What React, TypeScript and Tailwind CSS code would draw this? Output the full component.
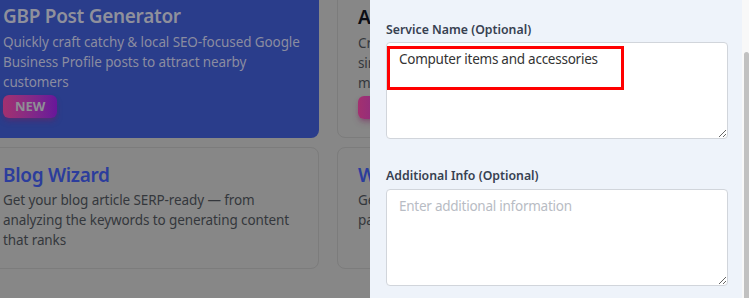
import React from 'react';

interface ToolCardProps {
    title: string;
    description: string;
    badge?: boolean;
    active?: boolean;
    titleClass?: string;
    descClass?: string;
}

// The page sits behind the drawer's backdrop, so its colours are the dimmed ones.
const ToolCard: React.FC<ToolCardProps> = ({ title, description, badge, active, titleClass, descClass }) => {
    return (
        <div
            className={
                active
                    ? 'rounded-b-lg bg-[#2a3d8b] pl-[21px] pr-[14px] pb-[18px]'
                    : 'rounded-lg border border-[#7c7c7c] bg-[#878787] pl-5 pr-[14px] pb-[18px]'
            }
        >
            <h3 className={`text-[19px] leading-[28px] font-semibold tracking-[-0.3px] ${titleClass ?? ''}`}>{title}</h3>
            <p
                className={`text-[13.5px] leading-[20px] tracking-[-0.1px] ${active ? 'text-[#8a8ca0]' : 'text-[#34373c]'} ${descClass ?? ''}`}
            >
                {description}
            </p>
            {badge && (
                <span className="mt-[3px] inline-flex h-[23px] items-center rounded-md bg-gradient-to-r from-[#a3306f] to-[#69159a] px-3 text-[13px] font-bold text-[#8f8f95] shadow-md shadow-[#7a2060]/40">
                    NEW
                </span>
            )}
        </div>
    );
};

export default function App() {
    return (
        <div
            className="flex h-[298px] w-[749px] overflow-hidden bg-[#878787]"
            style={{ fontFamily: '"Noto Sans", "Open Sans", sans-serif' }}
        >
            {/* page behind the drawer */}
            <div className="w-[370px] shrink-0 overflow-hidden">
                <div className="ml-[-18px] mt-[-12px] grid w-[692px] grid-cols-[337px_337px] gap-x-[18px] gap-y-[9px]">
                    <ToolCard
                        active
                        title="GBP Post Generator"
                        titleClass="text-[#8f909c] pt-[14px]"
                        descClass="mt-[2px]"
                        description="Quickly craft catchy & local SEO-focused Google Business Profile posts to attract nearby customers"
                        badge
                    />
                    <ToolCard
                        title="AI Image Generator"
                        titleClass="text-[#0c0d14] pt-[14px]"
                        descClass="mt-[2px]"
                        description="Create stunning, on-brand images from a simple prompt in seconds — perfect for social media and marketing images"
                        badge
                    />
                    <ToolCard
                        title="Blog Wizard"
                        titleClass="text-[#2c3d9c] pt-[13px]"
                        descClass="mt-[1px]"
                        description="Get your blog article SERP-ready — from analyzing the keywords to generating content that ranks"
                    />
                    <ToolCard
                        title="Website Content"
                        titleClass="text-[#2c3d9c] pt-[13px]"
                        descClass="mt-[1px]"
                        description="Generate conversion-focused copy for every page of your website content"
                    />
                </div>
            </div>

            {/* drawer */}
            <div className="flex flex-1">
                <div className="flex-1 bg-[#eef3fa] pl-4 pr-[14px] pt-[21px]">
                    <label className="block text-[12.3px] leading-[18px] font-semibold text-[#374151]">
                        Service Name (Optional)
                    </label>
                    <div className="relative mt-[3px]">
                        <textarea
                            readOnly
                            defaultValue="Computer items and accessories"
                            className="block h-[97px] w-full resize-y rounded border border-[#d1d5db] bg-white px-3 py-[6px] text-[13.5px] leading-[20px] tracking-[-0.25px] text-[#333333] outline-none"
                        />
                        <div className="pointer-events-none absolute top-[4px] left-[1px] h-[44px] w-[237px] border-[3px] border-[#ff0000]" />
                    </div>

                    <label className="mt-[28px] block text-[12.3px] leading-[18px] font-semibold text-[#374151]">
                        Additional Info (Optional)
                    </label>
                    <textarea
                        placeholder="Enter additional information"
                        className="mt-[4px] block h-[97px] w-full resize-y rounded border border-[#d1d5db] bg-white px-3 py-[6px] text-[13.5px] leading-[20px] tracking-[-0.25px] text-[#333333] outline-none placeholder:text-[#b8bcc4]"
                    />
                </div>
                <div className="w-[7px] bg-[#f8f8f8] pt-[52px] pl-[2px]">
                    <div className="h-full w-[5px] rounded-t-sm bg-[#c1c1c1]" />
                </div>
            </div>
        </div>
    );
}
